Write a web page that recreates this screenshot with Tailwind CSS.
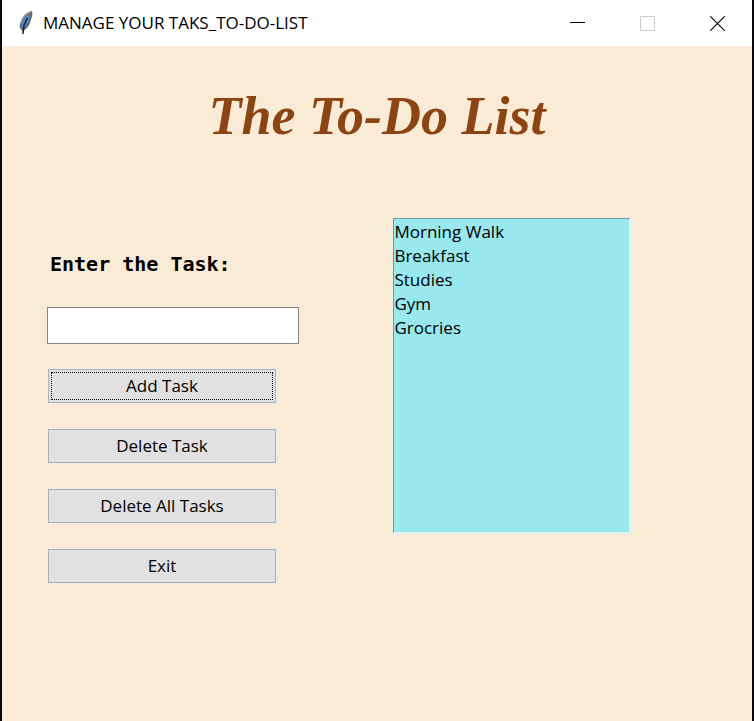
<!DOCTYPE html>
<html lang="en">
<head>
<meta charset="utf-8">
<meta name="viewport" content="width=device-width, initial-scale=1">
<title>MANAGE YOUR TAKS_TO-DO-LIST</title>
<script src="https://cdn.jsdelivr.net/npm/@tailwindcss/browser@4"></script>
</head>
<body class="flex min-h-screen flex-col border-x-2 border-[#08080c] bg-[#faebd7] font-['Segoe_UI','Open_Sans',sans-serif] text-black">
<header class="flex h-[46px] items-center bg-white pl-4">
  <svg class="h-6 w-5 shrink-0" viewBox="0 0 20 24" aria-hidden="true">
    <path d="M14 0C8 1 2.500 7 1.600 15.500L3 18.500l1.300 1 .5 4 1.400-4.200C10 17 12 13 12.700 9.500 14 6 15 2.500 14 0Z" fill="#63666a"/>
    <path d="M12 3C8.500 4.500 4 9.500 3.200 15.500L5.500 17C8.500 14.500 11 11 11.500 8Z" fill="#4a8ad8"/>
    <path d="M13.200 1C8.500 2.500 4 7.500 2.600 13" fill="none" stroke="#b4b0aa"/>
    <path d="m9.500 7-3.500 7-1 9" fill="none" stroke="#111a28" stroke-width="1.300"/>
  </svg>
  <h1 class="ml-[5px] flex-1 text-[17px] whitespace-nowrap">MANAGE YOUR TAKS_TO-DO-LIST</h1>
  <div class="flex h-full">
    <button type="button" aria-label="Minimize" class="flex w-[70px] items-center justify-center"><svg class="h-[15px] w-[15px]" viewBox="0 0 15 15"><path d="M0 6.500H15" stroke="#000"/></svg></button>
    <button type="button" aria-label="Maximize" disabled class="flex w-[70px] items-center justify-center"><svg class="h-[15px] w-[15px]" viewBox="0 0 15 15"><path d="M.5.5h14v14H.5Z" fill="none" stroke="#ccc"/></svg></button>
    <button type="button" aria-label="Close" class="flex w-[70px] items-center justify-center"><svg class="h-[15px] w-[15px]" viewBox="0 0 15 15"><path d="m.3.3 14.400 14.400M14.700.3.3 14.700" stroke="#000" stroke-width="1.100"/></svg></button>
  </div>
</header>
<main class="flex-1">
  <h2 class="pt-9 text-center font-['Brush_Script_MT','Brush_Script_Std','Liberation_Serif',serif] text-[54px] leading-[68px] font-bold text-[#8b4513] italic">The To-Do List</h2>
  <div class="grid grid-cols-[49%_1fr] items-start pt-[68px] pl-[45px]">
    <form class="flex flex-col items-start pt-8" onsubmit="return false">
      <label for="task" class="pl-[3px] font-['Consolas','DejaVu_Sans_Mono',monospace] text-[20px] leading-7 font-bold">Enter the Task:</label>
      <input id="task" type="text" class="mt-[29px] h-[37px] w-[252px] border border-[#858585] bg-white px-1 text-[17px] outline-none">
      <div class="mt-[25px] ml-px flex w-[228px] flex-col gap-[26px] text-[17px] leading-6">
        <button id="add" type="button" class="h-[34px] border border-[#acb0b8] bg-[#e1e1e1] p-0.5 ring-1 ring-[#eeece6]"><span class="flex h-full items-center justify-center border border-dotted border-black">Add Task</span></button>
        <button id="delete" type="button" class="h-[34px] border border-[#acb0b8] bg-[#e1e1e1] ring-1 ring-[#eeece6]">Delete Task</button>
        <button id="clear" type="button" class="h-[34px] border border-[#acb0b8] bg-[#e1e1e1] ring-1 ring-[#eeece6]">Delete All Tasks</button>
        <button id="exit" type="button" class="h-[34px] border border-[#acb0b8] bg-[#e1e1e1] ring-1 ring-[#eeece6]">Exit</button>
      </div>
    </form>
    <select id="tasks" size="13" aria-label="Tasks" class="ml-px h-[316px] w-[238px] appearance-none overflow-hidden rounded-none border border-t-[#6c9da2] border-r-2 border-r-[#e0f6f4] border-b-2 border-b-[#e0f6f4] border-l-[#6c9da2] bg-[#98e8ee] p-0 pt-px text-[17px] outline-none">
      <option class="h-6 p-0 leading-6">Morning Walk</option>
      <option class="h-6 p-0 leading-6">Breakfast</option>
      <option class="h-6 p-0 leading-6">Studies</option>
      <option class="h-6 p-0 leading-6">Gym</option>
      <option class="h-6 p-0 leading-6">Grocries</option>
    </select>
  </div>
</main>
<script>
  const task = document.getElementById('task');
  const tasks = document.getElementById('tasks');
  document.getElementById('add').onclick = () => {
    if (!task.value.trim()) return;
    const item = new Option(task.value.trim());
    item.className = 'h-6 p-0 leading-6';
    tasks.add(item);
    task.value = '';
  };
  document.getElementById('delete').onclick = () => tasks.selectedIndex >= 0 && tasks.remove(tasks.selectedIndex);
  document.getElementById('clear').onclick = () => tasks.replaceChildren();
  document.getElementById('exit').onclick = () => window.close();
</script>
</body>
</html>
